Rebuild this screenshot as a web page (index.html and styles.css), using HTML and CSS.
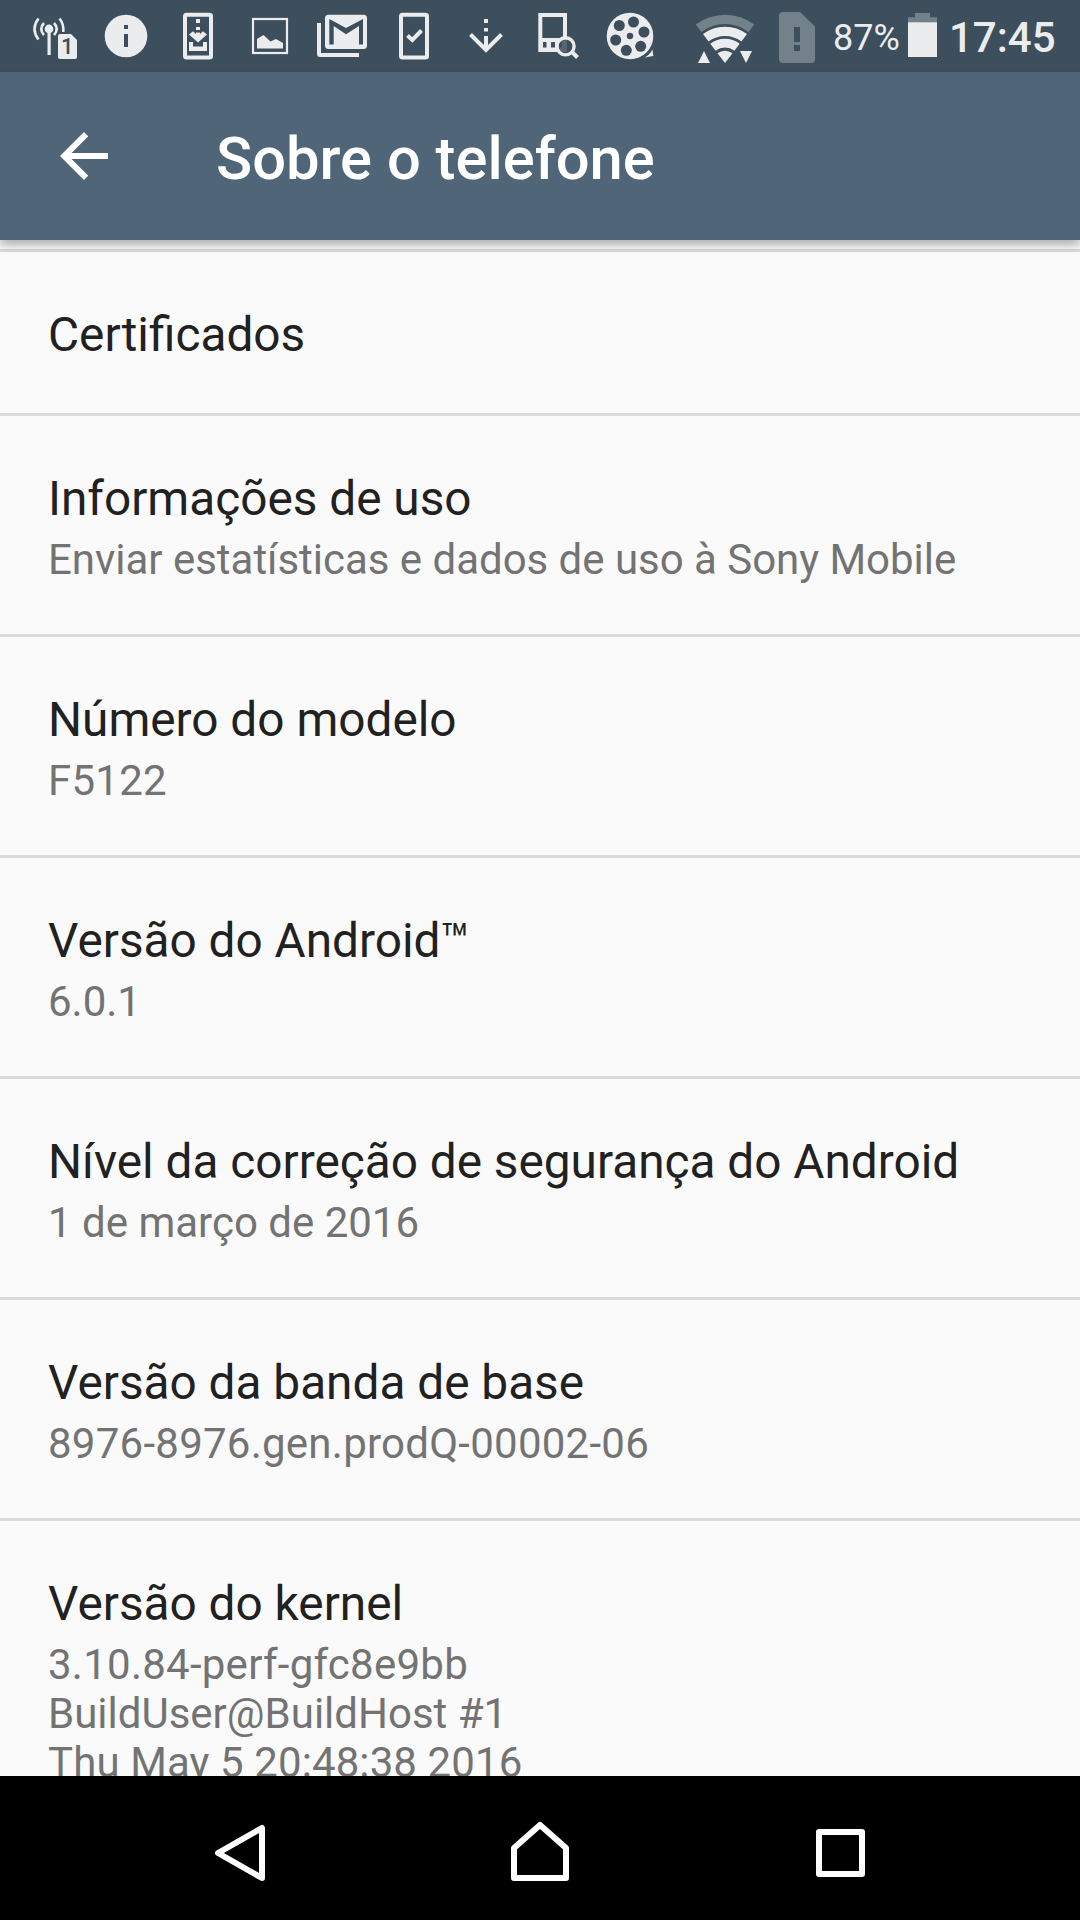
FILE: index.html
```html
<!DOCTYPE html>
<html lang="pt-BR">
<head>
<meta charset="utf-8">
<title>Sobre o telefone</title>
<link rel="stylesheet" href="styles.css">
</head>
<body>
<div class="screen">
  <div class="status-bar">
    <div class="notifications">
      <svg viewBox="18 0 72 72"><g class="line"><path d="M44 23Q38.500 29 44 35M38.500 18.500Q30.500 29 38.500 39.500M54 23Q59.500 29 54 35M59.500 18.500Q64 24 63.300 32" stroke-width="2.600"/></g><circle cx="49" cy="29" r="4.400"/><path d="M47.500 31h3.200v24h-3.200z"/><path d="M60 34H71L77 40V57Q77 59 75 59H60Q58 59 58 57V36Q58 34 60 34Z"/><text class="sim-digit" x="61" y="54.300">1</text></svg>
      <svg viewBox="90 0 72 72"><circle cx="126" cy="36" r="21.300"/><path class="cut" d="M124 25h4v4h-4zM124 34h4v13h-4z"/></svg>
      <svg viewBox="162 0 72 72"><rect class="line" x="185" y="14.700" width="26" height="42.800" rx="1.500" stroke-width="4"/><path d="M196 19h4v4h-4zM196 27h4v3h-4zM196 32.500h4V34L203 31.200L207 34.500L198 42.500L189 34.500L193 31.200L196 34ZM189 42h4v4.500h10V42h4v9h-18z"/></svg>
      <svg viewBox="234 0 72 72"><rect class="line" x="253" y="19" width="34" height="34" stroke-width="2.200"/><path d="M257 48.500V39L263.500 35L270.500 41.500L276 39L283 43V48.500Z"/></svg>
      <svg viewBox="306 0 72 72"><path d="M317 23h4v30h38v4H320Q317 57 317 54Z"/><rect x="325" y="14.700" width="42" height="34.300" rx="3.500"/><path class="cut" d="M329.300 19L346 28L363 19V44.500H359V26L346 34.200L333.700 26V44.500H329.300Z"/></svg>
      <svg viewBox="378 0 72 72"><rect class="line" x="401" y="14.700" width="26" height="42.800" rx="1.500" stroke-width="4"/><path class="line" d="M407.500 35.500L412.300 40L421.500 30.500" stroke-width="4"/></svg>
      <svg viewBox="450 0 72 72"><path d="M484 19h4v4h-4zM484 28h4v3.500h-4zM484 36h4v13h-4z"/><path class="line" d="M470.500 34.500L486 50L501.500 34.500" stroke-width="4"/></svg>
      <svg viewBox="522 0 72 72"><path class="line" d="M540.300 15H565V50H540.300Z" stroke-width="4"/><path d="M540 38h24v14h-24z"/><path class="cut" d="M543 42h3.500v5.500h-3.500zM551 42h4v5.500h-4zM559 42h3v5.500h-3z"/><circle class="cut" cx="565.500" cy="46.300" r="7" fill-opacity=".85"/><circle class="line" cx="565.500" cy="46.300" r="8.600" stroke-width="3.400"/><path class="line" d="M572 52L577.500 57.500" stroke-width="4"/></svg>
      <svg viewBox="594 0 72 72"><circle cx="630" cy="36" r="23.300"/><g class="cut"><circle cx="619.300" cy="25.500" r="5.500"/><circle cx="633.500" cy="22" r="5.500"/><circle cx="644" cy="32" r="5.500"/><circle cx="640.700" cy="46.300" r="5.500"/><circle cx="626.300" cy="50.300" r="5.500"/><circle cx="615.700" cy="40" r="5.500"/><circle cx="630" cy="36" r="3.200"/></g><path d="M652.500 49.500L653.300 56L644.500 57.500Q650 54.500 652.500 49.500Z"/></svg>
    </div>
    <div class="system">
      <svg class="wifi" viewBox="689 0 72 72"><path class="dim" d="M695.700 24.600A48.300 48.300 0 0 1 754.300 24.600L748.600 32A39 39 0 0 0 701.400 32Z"/><path d="M703 34.100A36.300 36.300 0 0 1 747 34.100L741.400 41.500A27 27 0 0 0 708.600 41.500ZM710.300 43.700A24.300 24.300 0 0 1 739.700 43.700L734.400 50.700A15.500 15.500 0 0 0 715.600 50.700ZM717.500 53.200A12.300 12.300 0 0 1 732.500 53.200L725 63ZM704 51L710 63H698ZM740 51H752L746 63Z"/></svg>
      <svg class="sim" viewBox="779 0 36 72"><path class="dim" d="M783 12H800L815 26.500V59Q815 63 811 63H783Q779 63 779 59V16Q779 12 783 12Z"/><path class="cut" d="M794 27h6v15h-6zM794 45h6v6h-6z"/></svg>
      <span class="percent">87%</span>
      <svg class="battery" viewBox="908 0 29 72"><path class="dim" d="M915 13h15v4.300h7V22.500h-29v-5.200h7z"/><path d="M908 22.300h29V57h-29z"/></svg>
      <span class="clock">17:45</span>
    </div>
  </div>

  <header class="app-bar">
    <svg class="back" viewBox="0 0 24 24"><path d="M20 11H7.830l5.590-5.590L12 4l-8 8 8 8 1.410-1.410L7.830 13H20v-2z"/></svg>
    <h1 class="title">Sobre o telefone</h1>
  </header>

  <main class="list">
    <section class="row"><h2>Certificados</h2></section>
    <section class="row"><h2>Informações de uso</h2><p class="prose">Enviar estatísticas e dados de uso à Sony Mobile</p></section>
    <section class="row"><h2>Número do modelo</h2><p class="code">F5122</p></section>
    <section class="row"><h2>Versão do Android™</h2><p>6.0.1</p></section>
    <section class="row"><h2>Nível da correção de segurança do Android</h2><p>1 de março de 2016</p></section>
    <section class="row"><h2>Versão da banda de base</h2><p class="code">8976-8976.gen.prodQ-00002-06</p></section>
    <section class="row"><h2>Versão do kernel</h2><p><span class="code">3.10.84-perf-gfc8e9bb</span><br>BuildUser@BuildHost #1<br><span class="date">Thu May 5 20:48:38 2016</span></p></section>
  </main>

  <nav class="nav-bar">
    <svg viewBox="204 1812 72 72"><path d="M218 1853L262 1828V1878Z"/></svg>
    <svg viewBox="504 1812 72 72"><path d="M540 1825L566 1848V1878H514V1848Z"/></svg>
    <svg viewBox="804 1812 72 72"><path d="M819 1832H862V1874H819Z"/></svg>
  </nav>
</div>
</body>
</html>
```

FILE: styles.css
```css
* {
  box-sizing: border-box;
}

body {
  margin: 0;
  font-family: Roboto, sans-serif;
}

svg {
  display: block;
  flex: none;
}

h1,
h2,
p {
  margin: 0;
}

.screen {
  display: flex;
  flex-direction: column;
  width: 1080px;
  height: 1920px;
  overflow: hidden;
  background: #fafafa;
}

.status-bar {
  display: flex;
  flex: none;
  justify-content: space-between;
  height: 72px;
  padding: 0 24px 0 18px;
  background: #3d4e5c;
  color: #ebecee;
}

.status-bar svg {
  height: 72px;
  fill: #ebecee;
}

.notifications {
  display: flex;
}

.notifications svg {
  width: 72px;
}

.status-bar .line {
  fill: none;
  stroke: #ebecee;
}

.status-bar .cut {
  fill: #3d4e5c;
}

.status-bar .dim {
  fill: #73818b;
}

.sim-digit {
  font-size: 22px;
  font-weight: 500;
  fill: #3d4e5c;
}

.system {
  display: flex;
  width: 367px;
  white-space: nowrap;
}

.wifi {
  width: 72px;
}

.sim {
  width: 36px;
  margin-left: 18px;
}

.percent {
  width: 75px;
  margin-left: 18px;
  font-size: 36px;
  line-height: 77px;
}

.battery {
  width: 29px;
}

.clock {
  margin-left: 12px;
  font-size: 42px;
  font-weight: 500;
  line-height: 75px;
}

.app-bar {
  display: flex;
  flex: none;
  position: relative;
  z-index: 1;
  height: 168px;
  padding: 48px 48px 0;
  background: #506678;
  color: #fff;
  box-shadow: 0 5px 9px rgba(0, 0, 0, .3);
}

.back {
  width: 72px;
  height: 72px;
  fill: #fff;
}

.title {
  margin: 4px 0 0 96px;
  font-size: 59.700px;
  font-weight: 500;
  line-height: 71px;
}

.list {
  flex: 1;
  min-height: 0;
  padding-top: 9px;
  overflow: hidden;
}

.row {
  padding: 54px 48px 50px;
  border-top: 3px solid #dadbdb;
}

.row h2 {
  height: 57px;
  padding-top: 1px;
  color: #212121;
  font-size: 47.750px;
  font-weight: 400;
  line-height: 57px;
}

.row p {
  margin-top: 8px;
  color: #737373;
  font-size: 42px;
  line-height: 49px;
}

.row .prose {
  letter-spacing: -.025px;
}

.row .code {
  letter-spacing: .25px;
}

.row .date {
  letter-spacing: .1px;
}

.nav-bar {
  display: flex;
  flex: none;
  justify-content: space-around;
  height: 144px;
  padding: 36px 90px;
  background: #000;
}

.nav-bar svg {
  width: 72px;
  height: 72px;
  fill: none;
  stroke: #fff;
  stroke-width: 6px;
  stroke-linejoin: round;
}
```
